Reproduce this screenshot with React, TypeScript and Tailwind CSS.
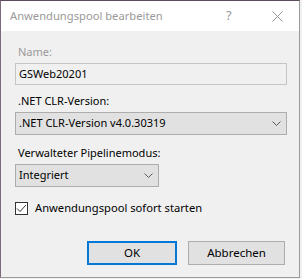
import React from "react";

const font = { fontFamily: '"Segoe UI", "Noto Sans", sans-serif' };

function Chevron() {
  return (
    <svg width="9" height="5" viewBox="0 0 9 5" className="shrink-0">
      <path d="M0.5 0.5 L4.5 4.5 L8.5 0.5" fill="none" stroke="#5a5a5a" strokeWidth="1" />
    </svg>
  );
}

function Select({ value, className }: { value: string; className?: string }) {
  return (
    <div
      className={`flex h-[23px] items-center justify-between border border-[#adadad] bg-[#e1e1e1] pl-[3px] pr-[5px] text-black ${className ?? ""}`}
    >
      <span>{value}</span>
      <Chevron />
    </div>
  );
}

export default function App() {
  return (
    <div className="h-[279px] w-[302px] bg-[#f0f0f0]" style={font}>
      <div className="flex h-[278px] w-[300px] flex-col border border-[#9a9a9a] border-t-[#5c4a5c] border-l-[#7a6a7a] bg-[#f0f0f0]">
        {/* title bar */}
        <div className="flex h-[30px] items-center bg-white pl-[9px] text-[11.2px] text-[#999999]">
          <span className="flex-1">Anwendungspool bearbeiten</span>
          <span className="w-[14px] text-[13px]">?</span>
          <svg width="11" height="11" viewBox="0 0 11 11" className="ml-[32px] mr-[16px]">
            <path d="M0.5 0.5 L10.5 10.5 M10.5 0.5 L0.5 10.5" stroke="#999999" strokeWidth="1" />
          </svg>
        </div>

        {/* body */}
        <div className="flex flex-1 flex-col px-[14px] pt-[13px] text-[11px] text-black">
          <div className="pl-[3px] leading-[16px] text-[#9a9a9a]">Name:</div>
          <div className="mt-[3px] flex h-[22px] w-[272px] items-center border border-[#c4c4c4] bg-[#f0f0f0] pl-[3px]">
            GSWeb20201
          </div>

          <div className="mt-[8px] pl-[3px] leading-[16px]">.NET CLR-Version:</div>
          <Select value=".NET CLR-Version v4.0.30319" className="mt-[3px] w-[272px]" />

          <div className="mt-[10px] pl-[3px] leading-[16px]">Verwalteter Pipelinemodus:</div>
          <Select value="Integriert" className="mt-[3px] w-[144px]" />

          <label className="mt-[13px] flex items-center gap-[7px]">
            <span className="flex h-[13px] w-[13px] items-center justify-center border border-[#333333] bg-white">
              <svg width="11" height="9" viewBox="0 0 11 9">
                <path d="M1 4.5 L4 7.5 L10 1" fill="none" stroke="#333333" strokeWidth="1" />
              </svg>
            </span>
            <span className="leading-[16px] text-[11.2px]">Anwendungspool sofort starten</span>
          </label>

          <div className="mt-[25px] flex justify-end gap-[11px]">
            <button className="h-[24px] w-[90px] border-2 border-[#0078d7] bg-[#e1e1e1] text-[11.5px]">OK</button>
            <button className="h-[24px] w-[97px] border border-[#adadad] bg-[#e1e1e1] text-[11.5px]">Abbrechen</button>
          </div>
        </div>
      </div>
    </div>
  );
}
